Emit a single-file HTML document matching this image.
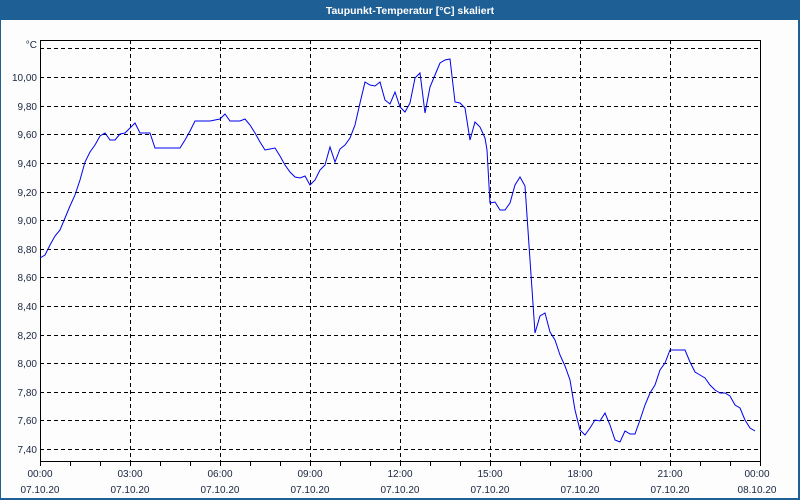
<!DOCTYPE html>
<html><head><meta charset="utf-8"><style>
html,body{margin:0;padding:0;background:#fff}
svg{display:block}
text{font-family:"Liberation Sans","DejaVu Sans",sans-serif;font-size:10px;fill:#1a2540}
</style></head><body>
<svg width="800" height="500" viewBox="0 0 800 500" xmlns="http://www.w3.org/2000/svg">
<rect x="0" y="0" width="800" height="500" fill="#1e5f96"/>
<rect x="1" y="20" width="797" height="478" fill="#fcfdfc"/>
<text x="410" y="14" text-anchor="middle" style="font-weight:bold;fill:#fff;font-size:10.5px">Taupunkt-Temperatur [°C] skaliert</text>
<g stroke="#000" stroke-width="1" stroke-dasharray="4,3" fill="none">
<path d="M40 48.5H760M40 77.5H760M40 106.5H760M40 134.5H760M40 163.5H760M40 192.5H760M40 220.5H760M40 249.5H760M40 277.5H760M40 306.5H760M40 335.5H760M40 363.5H760M40 392.5H760M40 420.5H760M40 449.5H760"/>
<path d="M130.5 40V461M220.5 40V461M310.5 40V461M400.5 40V461M490.5 40V461M580.5 40V461M670.5 40V461"/>
</g>
<rect x="40.5" y="40.5" width="720" height="421" fill="none" stroke="#000" stroke-width="1"/>
<g stroke="#000"><path d="M40.5 461V466M70.5 461V466M100.5 461V466M130.5 461V466M160.5 461V466M190.5 461V466M220.5 461V466M250.5 461V466M280.5 461V466M310.5 461V466M340.5 461V466M370.5 461V466M400.5 461V466M430.5 461V466M460.5 461V466M490.5 461V466M520.5 461V466M550.5 461V466M580.5 461V466M610.5 461V466M640.5 461V466M670.5 461V466M700.5 461V466M730.5 461V466M760.5 461V466"/></g>
<polyline fill="none" stroke="#0000ee" stroke-width="1" points="40,258 45,255 50,245 55,236 60,230 65,218 70,206 75,195 80,180 85,162 90,152 95,145 100,136 105,133 110,140 115,140 120,134 125,133 130,128 135,123 140,133 145,133 150,133 155,148 160,148 180,148 185,140 190,131 195,121 210,121 215,120 220,119 225,114 230,121 235,121 240,121 245,119 250,125 255,133 260,142 265,150 270,149 275,148 280,156 285,165 290,172 295,177 300,178 305,176 310,185 315,180 320,170 325,165 330,147 335,162 340,149 345,145 350,138 355,125 360,103 365,82 370,85 375,86 380,82 385,100 390,104 395,92 400,107 405,112 410,103 415,78 420,73 425,113 430,87 435,75 440,63 445,60 450,59 455,102 460,103 465,108 470,140 475,122 480,127 485,138 487,150 490,203 495,202 500,210 505,210 510,203 515,185 520,177 525,186 530,260 535,333 540,316 545,313 550,332 555,340 560,355 565,366 570,380 575,410 580,430 585,435 590,428 595,420 600,421 605,413 610,425 615,440 620,442 625,431 630,434 635,434 640,420 645,405 650,393 655,385 660,370 665,363 670,350 675,350 680,350 685,350 690,362 695,372 700,375 705,378 710,385 715,390 720,393 725,393 730,396 735,405 740,408 745,420 750,428 755,431"/>
<g text-anchor="end">
<text x="37" y="48">°C</text>
<text x="37" y="81">10,00</text>
<text x="37" y="110">9,80</text>
<text x="37" y="138">9,60</text>
<text x="37" y="167">9,40</text>
<text x="37" y="196">9,20</text>
<text x="37" y="224">9,00</text>
<text x="37" y="253">8,80</text>
<text x="37" y="281">8,60</text>
<text x="37" y="310">8,40</text>
<text x="37" y="339">8,20</text>
<text x="37" y="367">8,00</text>
<text x="37" y="396">7,80</text>
<text x="37" y="424">7,60</text>
<text x="37" y="453">7,40</text>
</g>
<g text-anchor="middle">
<text x="40" y="477">00:00</text><text x="40" y="493">07.10.20</text>
<text x="130" y="477">03:00</text><text x="130" y="493">07.10.20</text>
<text x="220" y="477">06:00</text><text x="220" y="493">07.10.20</text>
<text x="310" y="477">09:00</text><text x="310" y="493">07.10.20</text>
<text x="400" y="477">12:00</text><text x="400" y="493">07.10.20</text>
<text x="490" y="477">15:00</text><text x="490" y="493">07.10.20</text>
<text x="580" y="477">18:00</text><text x="580" y="493">07.10.20</text>
<text x="670" y="477">21:00</text><text x="670" y="493">07.10.20</text>
<text x="757" y="477">00:00</text><text x="757" y="493">08.10.20</text>
</g>
</svg>
</body></html>
